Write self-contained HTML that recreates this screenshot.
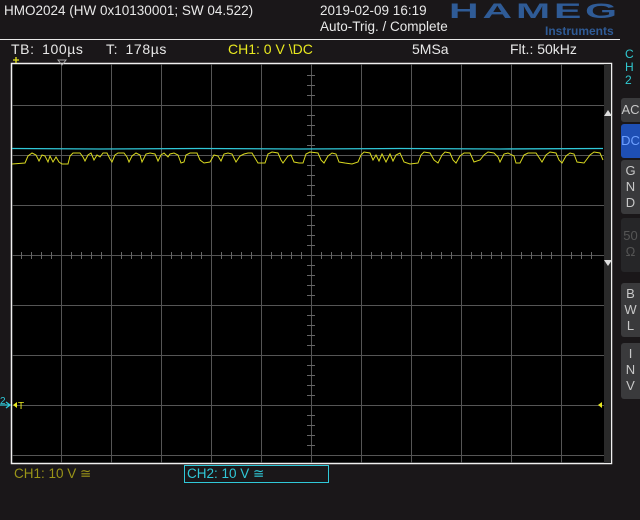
<!DOCTYPE html>
<html><head><meta charset="utf-8"><style>
html,body{margin:0;padding:0;background:#1a1719;width:640px;height:520px;overflow:hidden;font-family:"Liberation Sans",sans-serif;}
.t{position:absolute;white-space:nowrap;font-size:13.5px;color:#e8e8e8;line-height:16px;}
.r{font-size:14px;}
.btn{position:absolute;left:621px;width:19px;background:#3a3a3c;border-radius:3px 0 0 3px;color:#c8c8c8;font-size:13px;text-align:center;line-height:16px;}
</style></head><body>
<div class="t" style="left:4px;top:3px;">HMO2024 (HW 0x10130001; SW 04.522)</div>
<div class="t" style="left:320px;top:3px;">2019-02-09 16:19</div>
<div class="t" style="left:320px;top:19px;">Auto-Trig. / Complete</div>
<div class="t" style="left:449px;top:0px;font-weight:bold;font-size:21px;line-height:24px;color:#2f5b96;letter-spacing:2px;transform:scaleX(1.95);transform-origin:left top;">HAMEG</div>
<div class="t" style="left:545px;top:23px;font-weight:bold;font-size:12px;color:#2f5b96;">Instruments</div>
<div style="position:absolute;left:0;top:39px;width:620px;height:1px;background:#e8e8e8"></div>
<div class="t r" style="left:11px;top:41px;letter-spacing:0.6px;word-spacing:3px;">TB: 100µs&nbsp;&nbsp;&nbsp;T: 178µs</div>
<div class="t r" style="left:228px;top:41px;color:#e8e820;">CH1: 0 V \DC</div>
<div class="t r" style="left:412px;top:41px;">5MSa</div>
<div class="t r" style="left:510px;top:41px;">Flt.: 50kHz</div>
<div class="t" style="left:625px;top:48px;color:#30c8d0;font-size:12px;line-height:13px;">C<br>H<br>2</div>
<div class="btn" style="top:98px;height:24px;line-height:24px;">AC</div>
<div class="btn" style="top:124px;height:34px;line-height:34px;background:#1e4fb4;color:#6ea0ff;">DC</div>
<div class="btn" style="top:160px;height:54px;padding-top:3px;box-sizing:border-box;">G<br>N<br>D</div>
<div class="btn" style="top:218px;height:54px;padding-top:10px;box-sizing:border-box;background:#262628;color:#555;">50<br>Ω</div>
<div class="btn" style="top:283px;height:54px;padding-top:3px;box-sizing:border-box;">B<br>W<br>L</div>
<div class="btn" style="top:343px;height:56px;padding-top:3px;box-sizing:border-box;">I<br>N<br>V</div>
<svg style="position:absolute;left:0;top:0" width="640" height="520">
<rect x="11.5" y="63.5" width="600" height="400" fill="#000" stroke="#f0f0f0" stroke-width="1.5"/>
<rect x="604" y="64" width="7" height="399" fill="#2a2a2a"/>
<g stroke="#555" stroke-width="1">
<path d="M61.5 64V463M111.5 64V463M161.5 64V463M211.5 64V463M261.5 64V463M311.5 64V463M361.5 64V463M411.5 64V463M461.5 64V463M511.5 64V463M561.5 64V463"/>
<path d="M12 105.5H604M12 155.5H604M12 205.5H604M12 255.5H604M12 305.5H604M12 355.5H604M12 405.5H604M12 455.5H604"/>
</g>
<g stroke="#666" stroke-width="1">
<path d="M307 75.5h8M307 85.5h8M307 95.5h8M307 115.5h8M307 125.5h8M307 135.5h8M307 145.5h8M307 165.5h8M307 175.5h8M307 185.5h8M307 195.5h8M307 215.5h8M307 225.5h8M307 235.5h8M307 245.5h8M307 265.5h8M307 275.5h8M307 285.5h8M307 295.5h8M307 315.5h8M307 325.5h8M307 335.5h8M307 345.5h8M307 365.5h8M307 375.5h8M307 385.5h8M307 395.5h8M307 415.5h8M307 425.5h8M307 435.5h8M307 445.5h8"/>
<path d="M21.5 252v7M31.5 252v7M41.5 252v7M51.5 252v7M71.5 252v7M81.5 252v7M91.5 252v7M101.5 252v7M121.5 252v7M131.5 252v7M141.5 252v7M151.5 252v7M171.5 252v7M181.5 252v7M191.5 252v7M201.5 252v7M221.5 252v7M231.5 252v7M241.5 252v7M251.5 252v7M271.5 252v7M281.5 252v7M291.5 252v7M301.5 252v7M321.5 252v7M331.5 252v7M341.5 252v7M351.5 252v7M371.5 252v7M381.5 252v7M391.5 252v7M401.5 252v7M421.5 252v7M431.5 252v7M441.5 252v7M451.5 252v7M471.5 252v7M481.5 252v7M491.5 252v7M501.5 252v7M521.5 252v7M531.5 252v7M541.5 252v7M551.5 252v7M571.5 252v7M581.5 252v7M591.5 252v7"/>
</g>
<polyline fill="none" stroke="#30c8d8" stroke-width="1.3" points="12,148.5 100,149 200,148.5 300,149 400,148.5 500,149 603,148.5"/>
<polyline fill="none" stroke="#d8d820" stroke-width="1" points="12,164 25,163 28,156 32,153 36,155 39,161 42,155 45,156 48,162 50,156 53,162 56,157 59,162 62,164 68,164 70,156 73,153 80,153 83,157 85,161 88,155 91,153 94,160 97,155 100,157 103,153 107,153 110,159 112,162 115,155 118,153 124,153 127,157 129,162 132,156 136,153 140,155 142,162 146,154 150,153 155,154 158,161 161,155 164,153 168,157 170,154 174,153 178,155 181,163 184,162 186,155 190,153 197,153 200,160 204,163 210,162 214,155 218,156 221,161 224,154 228,153 232,154 236,162 240,156 244,154 248,153 252,153 255,158 258,163 265,163 268,154 272,152 278,153 281,160 283,163 288,156 291,155 294,162 299,163 303,163 306,154 310,152 318,153 321,160 324,163 328,156 332,153 336,154 339,162 345,163 352,164 358,162 361,155 364,152 370,153 373,160 376,155 379,161 382,154 386,162 390,154 393,161 396,155 400,153 404,162 410,164 418,163 421,155 424,152 430,153 434,160 438,163 442,155 445,152 450,153 453,160 456,163 460,156 464,153 470,153 474,162 480,160 484,155 488,152 494,153 498,157 500,162 504,154 508,153 514,156 516,163 520,163 524,155 528,153 536,153 540,159 542,162 546,155 550,152 556,153 559,160 562,163 566,156 570,153 574,154 577,162 584,163 590,155 594,152 600,153 603,160"/>
<path d="M13 60h6M16 57v6" stroke="#e8e820" stroke-width="1.3"/>
<path d="M58 60h8l-4 5z" fill="none" stroke="#aaa" stroke-width="1"/>
<path d="M604 116l4-6 4 6z M604 260l4 6 4-6z" fill="#ddd"/>
<path d="M598 405l4-3v6z" fill="#e8e820"/>
<text x="0" y="404" font-size="10" fill="#30c8d8">2</text>
<path d="M0 405h9M6 402l4 3-4 3" stroke="#30c8d8" fill="none" stroke-width="1.3"/>
<path d="M13 405l4-3v6z" fill="#e8e820"/>
<text x="18" y="409" font-size="10" fill="#e8e820" font-family="Liberation Sans">T</text>
<rect x="184.5" y="465.5" width="144" height="17" fill="none" stroke="#30c8d8" stroke-width="1"/>
</svg>
<div class="t" style="left:14px;top:466px;color:#9a9418;">CH1: 10 V ≅</div>
<div class="t" style="left:187px;top:466px;color:#30c8d8;">CH2: 10 V ≅</div>
</body></html>
